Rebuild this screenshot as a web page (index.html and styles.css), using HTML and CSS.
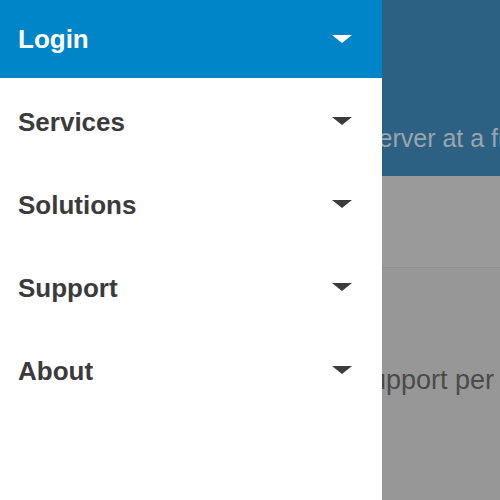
FILE: index.html
```html
<!DOCTYPE html>
<html lang="en">
<head>
<meta charset="utf-8">
<title>Menu</title>
<link rel="stylesheet" href="styles.css">
</head>
<body>
<div class="app">
  <nav class="drawer">
    <div class="item item-active"><span class="label">Login</span><span class="caret"></span></div>
    <div class="list">
      <div class="item"><span class="label">Services</span><span class="caret"></span></div>
      <div class="item"><span class="label">Solutions</span><span class="caret"></span></div>
      <div class="item"><span class="label">Support</span><span class="caret"></span></div>
      <div class="item"><span class="label">About</span><span class="caret"></span></div>
    </div>
  </nav>
  <main class="page">
    <section class="hero"><p class="hero-text">server at a fraction of the cost</p></section>
    <section class="band"></section>
    <section class="rest"><p class="rest-text">upport per</p></section>
  </main>
</div>
</body>
</html>
```
FILE: styles.css
```css
html, body {
  margin: 0;
  padding: 0;
}
body {
  width: 500px;
  height: 500px;
  overflow: hidden;
  font-family: "Liberation Sans", Arial, sans-serif;
}
.app {
  display: flex;
  height: 500px;
}
.drawer {
  width: 382px;
  flex: 0 0 382px;
  background: #ffffff;
  display: flex;
  flex-direction: column;
  position: relative;
  z-index: 1;
}
.list {
  padding-top: 2px;
  display: flex;
  flex-direction: column;
}
.item {
  height: 83px;
  display: flex;
  align-items: center;
  justify-content: space-between;
  padding: 0 30px 0 18px;
  color: #3b3b3b;
}
.item-active {
  height: 78px;
  background: #0085c9;
  color: #ffffff;
}
.label {
  font-size: 26px;
  font-weight: bold;
  line-height: 30px;
}
.caret {
  width: 0;
  height: 0;
  border-left: 10px solid transparent;
  border-right: 10px solid transparent;
  border-top: 8px solid currentColor;
  margin-top: -1px;
}
.page {
  flex: 1;
  display: flex;
  flex-direction: column;
  overflow: hidden;
}
.hero {
  height: 176px;
  flex: 0 0 176px;
  background: #2c6183;
  box-sizing: border-box;
  padding-top: 123px;
}
.hero-text {
  margin: 0 0 0 -16px;
  white-space: nowrap;
  font-size: 25px;
  line-height: 30px;
  color: #9aa5ad;
}
.band {
  height: 91px;
  flex: 0 0 91px;
  background: #9a9a9a;
  border-bottom: 1px solid #8e8e8e;
}
.rest {
  flex: 1;
  background: #979797;
  padding-top: 97px;
}
.rest-text {
  margin: 0 0 0 -11px;
  white-space: nowrap;
  font-size: 27px;
  line-height: 30px;
  color: #4a4a4a;
}
```
